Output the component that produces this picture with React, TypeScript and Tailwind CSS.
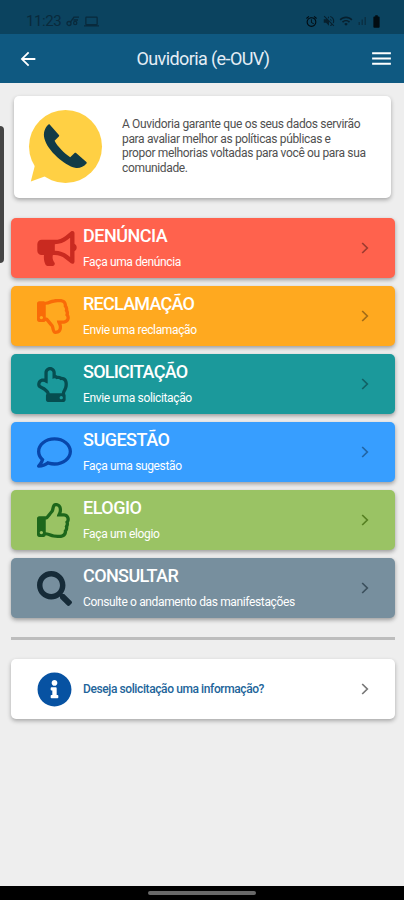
import type { IconType } from 'react-icons';
import {
  FaBullhorn,
  FaInfoCircle,
  FaRegComment,
  FaRegHandPointUp,
  FaRegThumbsDown,
  FaRegThumbsUp,
  FaSearch,
} from 'react-icons/fa';
import { MdAlarm, MdArrowBack, MdBatteryFull, MdLaptop, MdMenu, MdSignalCellularAlt, MdVolumeOff, MdWifi } from 'react-icons/md';

interface MenuItem {
  title: string;
  description: string;
  icon: IconType;
  card: string;
  iconClass: string;
  arrowColor: string;
  spacing: string;
}

const ITEMS: MenuItem[] = [
  { title: 'DENÚNCIA', description: 'Faça uma denúncia', icon: FaBullhorn, card: 'bg-[#ff624d]', iconClass: 'w-[40px] text-[#c92a20]', arrowColor: 'text-[#9d3c30]', spacing: 'tracking-[-0.5px]' },
  { title: 'RECLAMAÇÃO', description: 'Envie uma reclamação', icon: FaRegThumbsDown, card: 'bg-[#ffa91f]', iconClass: 'w-[35px] text-[#f96b08]', arrowColor: 'text-[#a36c18]', spacing: 'tracking-[-0.75px]' },
  { title: 'SOLICITAÇÃO', description: 'Envie uma solicitação', icon: FaRegHandPointUp, card: 'bg-[#1b999b]', iconClass: 'w-[31px] text-[#064d50]', arrowColor: 'text-[#126265]', spacing: 'tracking-[-0.75px]' },
  { title: 'SUGESTÃO', description: 'Faça uma sugestão', icon: FaRegComment, card: 'bg-[#379eff]', iconClass: 'w-[35px] text-[#0846aa]', arrowColor: 'text-[#2265a4]', spacing: 'tracking-[-0.5px]' },
  { title: 'ELOGIO', description: 'Faça um elogio', icon: FaRegThumbsUp, card: 'bg-[#9ac364]', iconClass: 'w-[35px] text-[#1d671b]', arrowColor: 'text-[#568022]', spacing: 'tracking-[-0.5px]' },
  { title: 'CONSULTAR', description: 'Consulte o andamento das manifestações', icon: FaSearch, card: 'bg-[#778f9e]', iconClass: 'w-[35px] text-[#162b38]', arrowColor: 'text-[#3c505d]', spacing: 'tracking-[-0.6px]' },
];

function Chevron({ className }: { className: string }) {
  return (
    <svg className={`h-3 w-2 ${className}`} viewBox="0 0 8 12" fill="none" stroke="currentColor" strokeWidth="1.7">
      <path d="M1.2 1 6.3 6l-5.1 5" />
    </svg>
  );
}

function StatusBar() {
  return (
    <div className="flex h-[34px] items-center bg-[#0b435f] pt-2 pr-5 pl-[26px] text-[#092a3c]">
      <span className="w-[36px] text-[15px] leading-none tracking-[-0.4px]">11:23</span>
      <svg className="ml-1 h-3 w-[14px]" viewBox="0 0 14 12" fill="none" stroke="currentColor" strokeWidth="1.3">
        <circle cx="3" cy="8.5" r="2" />
        <circle cx="9.2" cy="8" r="1.6" />
        <path d="M4.5 7 8 2.2h5M7.5 5h4.5" />
      </svg>
      <MdLaptop className="ml-1 size-[15px]" />
      <div className="ml-auto flex items-center text-[#07202e]">
        <MdAlarm className="size-[13px] text-[#020c12]" />
        <MdVolumeOff className="ml-1 size-[14px]" />
        <MdWifi className="ml-[3px] size-[14px]" />
        <MdSignalCellularAlt className="ml-[3px] size-[12px] text-[#0a3044]" />
        <MdBatteryFull className="ml-[1px] size-[15px] text-[#020c12]" />
      </div>
    </div>
  );
}

function PhoneBubble() {
  return (
    <svg className="mt-[13px] ml-[14px] size-[76px]" viewBox="0 0 76 76">
      <g fill="#ffd044">
        <circle cx="37.5" cy="37.5" r="36.5" />
        <path d="m7 56-4.2 16.5L18 67Z" />
      </g>
      <path
        fill="#113b46"
        d="M20.5 15.6c.5-.4 1-.3 1.4.2l9 10.2c.5.5.4 1-.1 1.5l-4.2 4.3C29.5 37.5 36 44 42.200 48.300l4.400-4.300c.5-.5 1-.5 1.500 0l10.300 9c.5.5.5 1 .1 1.500-3 3.500-7 5-11.500 4.300C37 56.500 19.500 42 16.400 29.500c-1.400-5.500.3-10.500 4.100-13.900Z"
      />
    </svg>
  );
}

function MenuCard({ item }: { item: MenuItem }) {
  const Icon = item.icon;
  return (
    <button className={`flex h-[60px] w-full items-center rounded-[5px] pl-[26px] text-left shadow-[0_2px_4px_rgba(0,0,0,0.35)] ${item.card}`}>
      <span className="flex w-[46px] shrink-0">
        <Icon className={`h-[35px] ${item.iconClass}`} />
      </span>
      <span className="flex flex-1 flex-col whitespace-nowrap text-white">
        <span className={`text-[18px] leading-[22px] font-medium ${item.spacing}`}>{item.title}</span>
        <span className="mt-[7px] text-[12px] leading-[17px] tracking-[-0.36px]">{item.description}</span>
      </span>
      <span className="mr-[26px]">
        <Chevron className={item.arrowColor} />
      </span>
    </button>
  );
}

export default function App() {
  return (
    <div className="relative flex h-[900px] w-[404px] flex-col overflow-hidden bg-[#eeeeee] font-['Roboto',sans-serif]">
      <StatusBar />
      <header className="flex h-[49px] items-center justify-between bg-[#0f5981] pr-[10px] pl-[17px] text-white">
        <MdArrowBack className="size-[22px]" />
        <h1 className="mr-[2px] text-[18px] tracking-[-0.6px] text-[#e4edf5]">Ouvidoria (e-OUV)</h1>
        <MdMenu className="size-[25px]" />
      </header>

      {/* edge panel handle */}
      <div className="absolute top-[126px] left-0 h-[137px] w-1 rounded-r bg-[#454545]" />

      <main className="flex-1 pr-[9px] pl-[11px]">
        <section className="mt-[13px] mr-1 ml-[3px] flex h-[102px] rounded-[5px] bg-white shadow-[0_2px_4px_rgba(0,0,0,0.3)]">
          <PhoneBubble />
          <p className="mt-[21px] ml-[18px] text-[12px] leading-[14.7px] tracking-[-0.34px] whitespace-nowrap text-[#505050]">
            A Ouvidoria garante que os seus dados servirão<br />
            para avaliar melhor as políticas públicas e<br />
            propor melhorias voltadas para você ou para sua<br />
            comunidade.
          </p>
        </section>

        <div className="mt-[21px] flex flex-col gap-2 -translate-y-px">
          {ITEMS.map(item => <MenuCard key={item.title} item={item} />)}
        </div>

        <hr className="mt-[18px] h-[3px] border-0 bg-[#bdbdbd]" />

        <button className="mt-[19px] flex h-[60px] w-full items-center rounded-[5px] bg-white pl-[26px] text-left shadow-[0_2px_4px_rgba(0,0,0,0.3)]">
          <FaInfoCircle className="mr-[11px] size-[35px] text-[#0752a2]" />
          <span className="flex-1 text-[12px] font-medium tracking-[-0.4px] text-[#22649a]">Deseja solicitação uma informação?</span>
          <span className="mr-[26px]"><Chevron className="text-[#777]" /></span>
        </button>
      </main>

      <footer className="flex h-[14px] justify-center bg-black pt-[5px]">
        <div className="h-1 w-[108px] rounded-full bg-[#696969]" />
      </footer>
    </div>
  );
}
